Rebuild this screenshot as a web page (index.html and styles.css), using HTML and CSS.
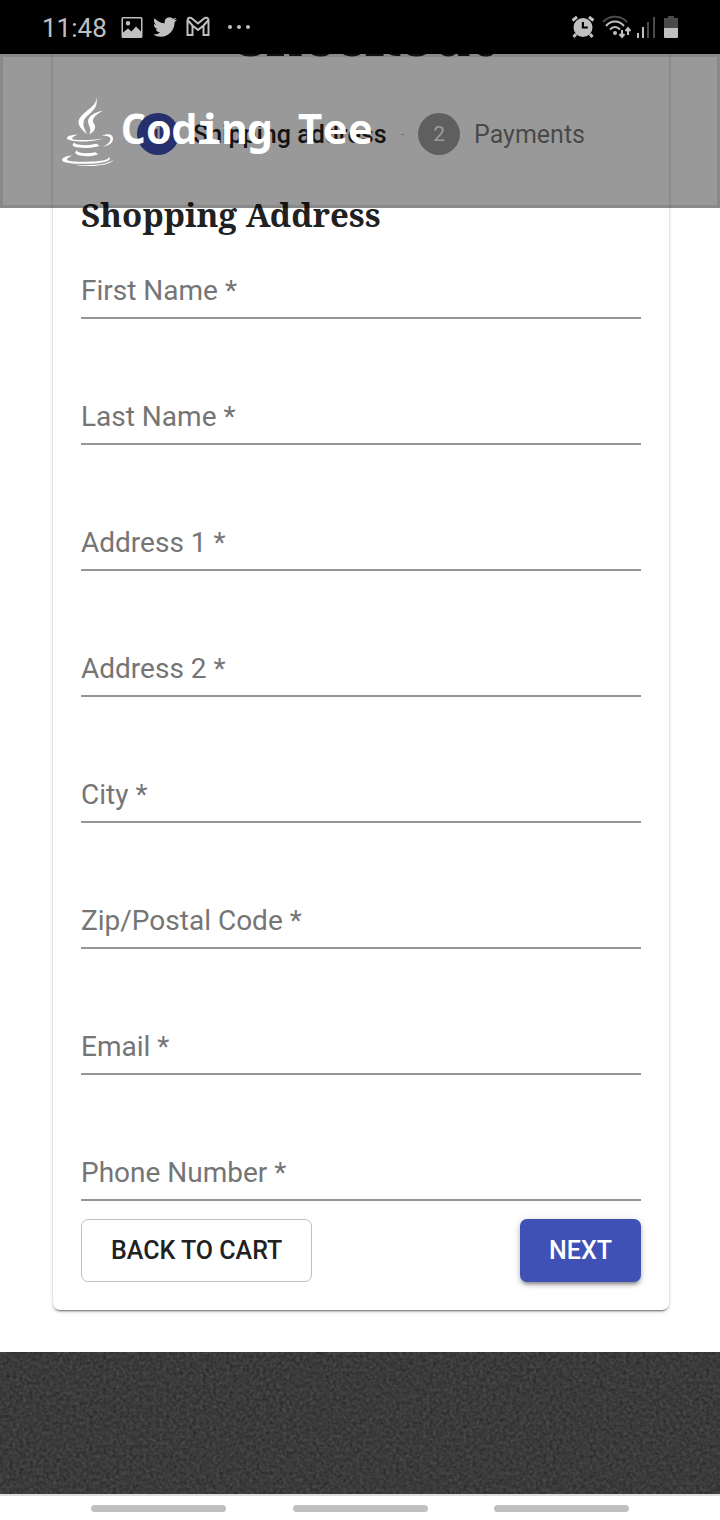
FILE: index.html
```html
<!DOCTYPE html>
<html lang="en">
<head>
<meta charset="utf-8">
<meta name="viewport" content="width=device-width, initial-scale=1">
<title>Coding Tee - Checkout</title>
<link rel="stylesheet" href="styles.css">
</head>
<body>
<div class="screen">
  <div class="status-bar">
    <div class="status-group">
      <span class="clock">11:48</span>
      <svg class="status-icon" viewBox="0 0 24 24" aria-hidden="true"><path fill-rule="evenodd" d="M3 2h18a1.500 1.500 0 0 1 1.500 1.500v18a1.500 1.500 0 0 1-1.500 1.500H3a1.500 1.500 0 0 1-1.500-1.500v-18A1.500 1.500 0 0 1 3 2zm0 1.500v14l5-4 3.500 3 4.500-5 5 5V3.500zM8 6a2.200 2.200 0 1 1 0 4.400A2.200 2.200 0 0 1 8 6z"/></svg>
      <svg class="status-icon" viewBox="0 0 24 24" aria-hidden="true"><path d="M23.950 4.570a10 10 0 0 1-2.820.780 4.960 4.960 0 0 0 2.160-2.730c-.950.560-2 .960-3.130 1.190a4.920 4.920 0 0 0-8.380 4.480C7.690 8.100 4.070 6.130 1.640 3.160a4.820 4.820 0 0 0-.670 2.480c0 1.710.870 3.210 2.190 4.100a4.900 4.900 0 0 1-2.230-.620v.060a4.920 4.920 0 0 0 3.950 4.830 5 5 0 0 1-2.210.080 4.940 4.940 0 0 0 4.600 3.420A9.870 9.870 0 0 1 0 19.540a14 14 0 0 0 7.550 2.210c9.050 0 14-7.500 14-13.980 0-.210 0-.420-.020-.630a9.940 9.940 0 0 0 2.460-2.550z"/></svg>
      <svg class="status-icon" viewBox="0 0 24 24" aria-hidden="true"><path class="line" d="M1.500 5.500c0-3 3-3.500 4.500-2L12 8.500l6-5c1.500-1.500 4.500-1 4.500 2V20h-5v-9.500L12 15l-5.500-4.500V20h-5zM2 5.500l4.500 5M22 5.500l-4.500 5"/></svg>
      <svg class="status-icon more" viewBox="0 0 24 24" aria-hidden="true"><circle cx="3" cy="12" r="2"/><circle cx="12" cy="12" r="2"/><circle cx="21" cy="12" r="2"/></svg>
    </div>
    <div class="status-group status-right">
      <svg class="status-icon" viewBox="0 0 24 24" aria-hidden="true"><path class="line thick" d="M1.500 5.500 6 2M22.500 5.500 18 2M5 19l-2.500 3M19 19l2.500 3"/><path fill-rule="evenodd" d="M12 3a9.500 9.500 0 1 1 0 19 9.500 9.500 0 0 1 0-19zm-1.200 4v6.500h6v-2H13V7z"/></svg>
      <svg class="wifi-icon" viewBox="0 0 30 24" aria-hidden="true"><path class="line dim" d="M2 7C8 0 20 0 26 7"/><path class="line" d="M5 11c5-6 13-6 18 0M9 14.500c3-3.500 7-3.500 10 0"/><circle cx="14" cy="18" r="2"/><path class="line" d="M21 15v7m-2.500-3 2.500 3 2.500-3M27 20v-7m-2.500 3 2.500-3 2.500 3"/></svg>
      <svg class="signal-icon" viewBox="0 0 18 24" aria-hidden="true"><path d="M0 18h2v5H0zM5 12h2v11H5z"/><path class="dim-fill" d="M10 7h2v16h-2zM16 2h2v21h-2z"/></svg>
      <svg class="battery-icon" viewBox="0 0 14 24" aria-hidden="true"><path class="dim-fill" d="M4 1h6v2h4v11H0V3h4z"/><path d="M0 13h14v9a1 1 0 0 1-1 1H1a1 1 0 0 1-1-1z"/></svg>
    </div>
  </div>

  <div class="page">
    <header class="site-header">
      <svg class="java-logo" viewBox="60 45 165 215" aria-hidden="true">
        <path d="M168 50c8 34-57 48-52 80 2 12 16 24 25 32-7-16-13-24-10-38 6-22 50-34 37-74z"/>
        <path d="M189 91c-24 5-46 17-45 34 1 13 12 18 4 38 20-12 20-24 13-34-8-14 8-26 28-38z"/>
        <path d="M113 163c-22 1-34 6-32 12 7 11 77 13 107 0-35 6-72 6-90 2-5-3 2-8 15-14z"/>
        <path d="M185 167c12-7 34-9 34 9 0 14-16 22-32 24 14-6 24-13 24-23 0-9-12-11-26-10z"/>
        <path d="M105 187c-13 7-8 13 12 15 24 3 46 1 62-5l-10-6c-18 5-36 5-54 2-8-1-12-3-10-6z"/>
        <path d="M112 210c-11 6-7 13 9 16 20 4 39 2 54-4l-10-6c-15 4-30 5-45 1-7-2-10-4-8-7z"/>
        <path d="M98 226c-20 1-34 8-32 14 5 12 69 13 105 9 30-3 45-10 36-18-2 9-26 12-56 13-38 2-68 0-70-5-1-4 6-9 17-13z"/>
        <path d="M103 254c44 8 111 3 116-15-17 16-68 18-116 15z"/>
      </svg>
      <span class="brand">Coding Tee</span>
    </header>

    <main class="card">
      <h1 class="title">Checkout</h1>
      <ol class="stepper">
        <li class="step active"><span class="badge">1</span>Shipping address</li>
        <li class="connector" aria-hidden="true"></li>
        <li class="step"><span class="badge">2</span>Payments</li>
      </ol>
      <h2 class="section-title">Shopping Address</h2>
      <form>
        <div class="fields">
          <div class="field"><label for="first-name">First Name *</label><input id="first-name" type="text" required></div>
          <div class="field"><label for="last-name">Last Name *</label><input id="last-name" type="text" required></div>
          <div class="field"><label for="address-1">Address 1 *</label><input id="address-1" type="text" required></div>
          <div class="field"><label for="address-2">Address 2 *</label><input id="address-2" type="text" required></div>
          <div class="field"><label for="city">City *</label><input id="city" type="text" required></div>
          <div class="field"><label for="zip">Zip/Postal Code *</label><input id="zip" type="text" required></div>
          <div class="field"><label for="email">Email *</label><input id="email" type="email" required></div>
          <div class="field"><label for="phone">Phone Number *</label><input id="phone" type="tel" required></div>
        </div>
        <div class="actions">
          <button class="button outlined" type="button">BACK TO CART</button>
          <button class="button primary" type="submit">NEXT</button>
        </div>
      </form>
    </main>
  </div>

  <footer class="site-footer">
    <svg class="texture" aria-hidden="true">
      <filter id="grain" x="0" y="0" width="100%" height="100%" color-interpolation-filters="sRGB">
        <feTurbulence type="fractalNoise" baseFrequency="0.3" numOctaves="4" seed="8" result="fine"/>
        <feColorMatrix in="fine" values="0.16 0.08 0 0 0.110  0.16 0.08 0 0 0.110  0.16 0.08 0 0 0.110  0 0 0 0 1"/>
      </filter>
      <rect width="100%" height="100%" filter="url(#grain)"/>
    </svg>
  </footer>
  <div class="nav-bar"><span class="handle"></span><span class="handle"></span><span class="handle"></span></div>
</div>
</body>
</html>
```
FILE: styles.css
```css
* { box-sizing: border-box; }

body {
  margin: 0;
  background: #fff;
  color: #212121;
  font-family: Roboto, "Liberation Sans", sans-serif;
}

.screen {
  display: flex;
  flex-direction: column;
  min-height: 100vh;
}

/* Device status bar */
.status-bar {
  position: relative;
  z-index: 2;
  display: flex;
  align-items: center;
  justify-content: space-between;
  height: 54px;
  padding: 0 42px;
  background: #000;
  color: #c0c0c0;
}

.status-bar svg { height: 24px; fill: #c0c0c0; }
.status-bar .line { fill: none; stroke: #c0c0c0; stroke-width: 2; }
.status-bar .thick { stroke-width: 3; }
.status-bar .dim { stroke: #4a4a4a; }
.status-bar .dim-fill { fill: #4a4a4a; }

.status-group { display: flex; align-items: center; gap: 9px; }
.clock { margin-right: 4px; padding-top: 2px; font-size: 26px; }
.status-icon { width: 24px; }
.more { margin-left: 8px; }
.wifi-icon { width: 30px; }
.signal-icon { width: 18px; }
.battery-icon { width: 14px; margin-left: 3px; }
.status-right { gap: 6px; }

/* Scrolled shop page under the translucent header */
.page {
  position: relative;
  overflow: hidden;
  padding: 0 51px 42px 53px;
}

.site-header {
  position: absolute;
  inset: 0 0 auto;
  z-index: 1;
  display: flex;
  align-items: center;
  gap: 6px;
  height: 154px;
  padding-left: 57px;
  border: 3px solid rgba(0, 0, 0, 0.1);
  background: rgba(0, 0, 0, 0.4);
}

.java-logo { width: 55px; height: 72px; fill: #fff; }

.brand {
  padding-bottom: 6px;
  color: #fff;
  font: bold 42px/48px "Noto Sans Mono", "DejaVu Sans Mono", monospace;
}

.card {
  margin-top: -50px;
  padding: 28px;
  border-radius: 7px;
  background: #fff;
  box-shadow: 0 3px 2px -2px rgba(0, 0, 0, 0.4), 0 1px 2px rgba(0, 0, 0, 0.2), 0 2px 5px rgba(0, 0, 0, 0.12);
}

.title,
.section-title {
  margin: 0;
  font-family: "Noto Serif", "DejaVu Serif", serif;
  font-weight: bold;
}

.title { margin: -28px 0 6px; font-size: 56px; line-height: 61px; text-align: center; }

.stepper {
  display: flex;
  align-items: center;
  gap: 14px;
  margin: 0;
  padding: 42px 56px 38px;
  list-style: none;
}

.step {
  display: flex;
  align-items: center;
  gap: 14px;
  color: rgba(0, 0, 0, 0.54);
  font-size: 25px;
  white-space: nowrap;
}

.step.active { color: #212121; font-weight: 500; }

.badge {
  display: grid;
  place-items: center;
  width: 42px;
  height: 42px;
  border-radius: 50%;
  background: #9e9e9e;
  color: #fff;
  font-size: 21px;
  font-weight: 400;
}

.active .badge { background: #3f51b5; }
.connector { flex: 1; height: 1px; background: #bdbdbd; }

.section-title { font-size: 33px; line-height: 44px; }

.fields { display: grid; gap: 72px; margin-top: 28px; }
.field { display: grid; }

.field label,
.field input { grid-area: 1 / 1; }

.field label {
  z-index: 1;
  align-self: center;
  justify-self: start;
  padding-bottom: 2px;
  color: #757575;
  font-size: 28px;
  line-height: 32px;
  pointer-events: none;
}

.field input {
  width: 100%;
  height: 54px;
  padding: 10px 0;
  border: 0;
  border-bottom: 2px solid #949494;
  border-radius: 0;
  background: transparent;
  font: inherit;
  font-size: 28px;
  outline: 0;
}

.actions { display: flex; justify-content: space-between; margin-top: 18px; }

.button {
  height: 63px;
  padding: 0 29px;
  border: 0;
  border-radius: 7px;
  font: 500 25px/42px Roboto, "Liberation Sans", sans-serif;
}

.outlined { border: 1px solid #c0c0c0; background: #fff; color: #212121; }

.primary {
  background: #3f51b5;
  color: #fff;
  box-shadow: 0 4px 3px -2px rgba(0, 0, 0, 0.25), 0 3px 5px rgba(0, 0, 0, 0.2), 0 1px 8px rgba(0, 0, 0, 0.12);
}

.site-footer { position: relative; flex: 1; min-height: 140px; background: #3a3a3a; }
.texture { position: absolute; inset: 0; width: 100%; height: 100%; }

.nav-bar {
  display: flex;
  align-items: center;
  justify-content: space-between;
  height: 26px;
  padding: 0 91px;
  border-top: 2px solid #ddd;
  background: #fff;
}

.handle { width: 135px; height: 7px; border-radius: 4px; background: #c0c0c0; }
```
